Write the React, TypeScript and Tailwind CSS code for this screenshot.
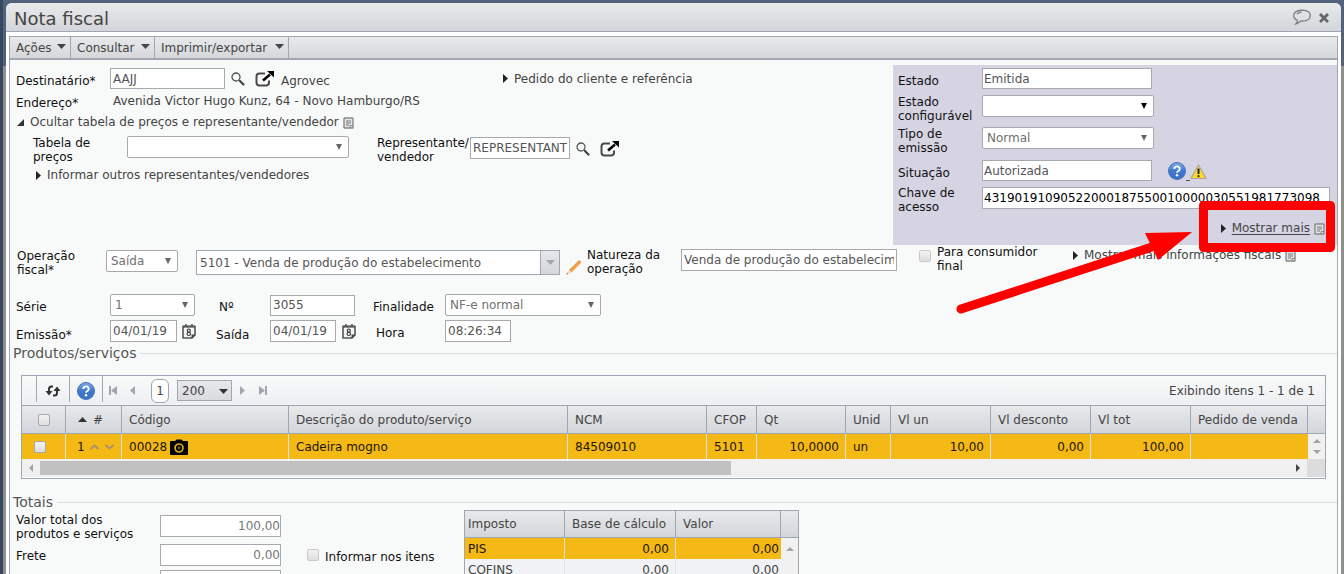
import type { ReactNode } from 'react';
import clsx from 'clsx';

const columns = [
  { label: 'Código', width: 'w-[167px]' },
  { label: 'Descrição do produto/serviço', width: '' },
  { label: 'NCM', width: 'w-[139px]' },
  { label: 'CFOP', width: 'w-[50px]' },
  { label: 'Qt', width: 'w-[89px]' },
  { label: 'Unid', width: 'w-[45px]' },
  { label: 'Vl un', width: 'w-[100px]' },
  { label: 'Vl desconto', width: 'w-[100px]' },
  { label: 'Vl tot', width: 'w-[100px]' },
  { label: 'Pedido de venda', width: 'w-[117px]' },
];

const taxes = [
  { name: 'PIS', base: '0,00', value: '0,00' },
  { name: 'COFINS', base: '0,00', value: '0,00' },
];

const menus = [
  { label: 'Ações', width: 'w-[61px]' },
  { label: 'Consultar', width: 'w-[84px]' },
  { label: 'Imprimir/exportar', width: 'w-[134px]' },
];

/* ---------- Icons ---------- */

function Triangle({ dir, className }: { dir: 'up' | 'down' | 'left' | 'right'; className?: string }) {
  const points = {
    up: '0,8 8,8 4,0',
    down: '0,0 8,0 4,8',
    left: '8,0 8,8 0,4',
    right: '0,0 8,4 0,8',
  };
  return (
    <svg viewBox="0 0 8 8" preserveAspectRatio="none" fill="currentColor" className={clsx('shrink-0', className)}>
      <polygon points={points[dir]} />
    </svg>
  );
}

function SearchIcon() {
  return (
    <svg viewBox="0 0 14 14" fill="none" className="h-3.5 w-3.5">
      <circle cx="5" cy="5" r="4" stroke="#555" strokeWidth="1.3" />
      <path d="M8 8l1.5 1.5" stroke="#444" strokeWidth="1.3" />
      <path d="M9 9l3.5 3.5" stroke="#444" strokeWidth="2.2" strokeLinecap="round" />
    </svg>
  );
}

function OpenIcon() {
  return (
    <svg viewBox="0 0 20 17" fill="none" className="h-[17px] w-5">
      <path d="M10 3.500H4.500Q1.500 3.500 1.500 6.500v6Q1.500 15.500 4.500 15.500H11q3 0 3-3V10.500" stroke="#4a4a4a" strokeWidth="2" />
      <path d="M8 10.500l7-6" stroke="#000" strokeWidth="2.600" />
      <path d="M12 1H19v6.500z" fill="#000" />
    </svg>
  );
}

function NoteIcon() {
  return (
    <svg viewBox="0 0 11 12" fill="none" className="h-3 w-[11px] shrink-0">
      <rect x="1" y="1" width="9" height="10" rx="0.500" fill="#e4e4e4" stroke="#888" strokeWidth="1.400" />
      <path d="M3 4h5M3 6h5M3 8h3" stroke="#777" />
      <path d="M7 11V8.500h3" stroke="#888" />
    </svg>
  );
}

function CalendarIcon() {
  return (
    <svg viewBox="0 0 14 15" fill="none" className="h-[15px] w-3.5">
      <path d="M1 2.500h12V11l-3 3H1z" fill="#f4f4f4" stroke="#555" strokeWidth="1.600" />
      <path d="M1 2.500h12" stroke="#555" strokeWidth="2" />
      <path d="M4 0v2M10 0v2" stroke="#555" strokeWidth="1.500" />
      <path d="M9.500 14.500V10.500H13.500z" fill="#444" />
      <circle cx="6.800" cy="6.600" r="1.500" stroke="#444" strokeWidth="1.200" />
      <circle cx="6.800" cy="9.800" r="1.700" stroke="#444" strokeWidth="1.200" />
    </svg>
  );
}

function HelpIcon() {
  return (
    <svg viewBox="0 0 18 18" className="h-[18px] w-[18px]">
      <defs>
        <linearGradient id="help" x1="0" y1="0" x2="0" y2="1">
          <stop offset="0" stopColor="#7fabe6" />
          <stop offset="0.5" stopColor="#3f78cc" />
          <stop offset="1" stopColor="#3a70c4" />
        </linearGradient>
      </defs>
      <circle cx="9" cy="9" r="8.500" fill="url(#help)" stroke="#4673b8" />
      <path d="M6.300 7q0-2.600 2.700-2.600T11.700 7q0 1.300-1.400 2Q9 9.700 9 10.800" fill="none" stroke="#fff" strokeWidth="1.900" />
      <circle cx="9" cy="13.300" r="1.200" fill="#fff" />
    </svg>
  );
}

function WarningIcon() {
  return (
    <svg viewBox="0 0 17 16" className="h-4 w-[17px]">
      <path d="M8.500 1L16 14.500H1z" fill="#ffdc28" stroke="#a5a5a0" strokeWidth="1.200" strokeLinejoin="round" />
      <path d="M8.500 4.500v5.500" stroke="#222" strokeWidth="2" />
      <circle cx="8.500" cy="12.200" r="1.100" fill="#222" />
    </svg>
  );
}

function PencilIcon() {
  return (
    <svg viewBox="0 0 16 16" className="h-4 w-4">
      <path d="M12.500 1.500Q13.500 1 14.500 2T14.800 4L5.500 13.500 2.800 11z" fill="#f0a04b" />
      <path d="M2.800 11L5.500 13.500 1 15.500 0.500 15z" fill="#f3dcc0" />
      <path d="M1.200 13.800L2.300 15 0.500 15.500z" fill="#8a6a4a" />
    </svg>
  );
}

function CameraIcon() {
  return (
    <svg viewBox="0 0 18 16" className="h-4 w-[18px]">
      <path d="M5 2L6.500 0.500h5L13 2H17q1 0 1 1V15q0 1-1 1H1q-1 0-1-1V3q0-1 1-1z" fill="#000" />
      <circle cx="9" cy="9" r="4" fill="none" stroke="#e0a817" strokeWidth="1.700" />
      <circle cx="9" cy="9" r="1.400" fill="#7a5c10" />
    </svg>
  );
}

function RefreshIcon() {
  return (
    <svg viewBox="0 0 16 12" fill="none" className="h-3 w-4">
      <path d="M8 1.500H6.500Q4 1.500 4 4v4" stroke="#333" strokeWidth="2" />
      <path d="M0.500 6h7L4 10.500z" fill="#333" />
      <path d="M8 10.500h1.500Q12 10.500 12 8V4" stroke="#333" strokeWidth="2" />
      <path d="M8.500 6h7L12 1.500z" fill="#333" />
    </svg>
  );
}

/* ---------- Form pieces ---------- */

function Label({ htmlFor, className, children }: { htmlFor?: string; className?: string; children: ReactNode }) {
  return (
    <label htmlFor={htmlFor} className={clsx('shrink-0 leading-[14px] text-[#111]', className)}>
      {children}
    </label>
  );
}

function TextInput({ id, value, className, label, color = 'text-[#555]' }: { id?: string; value?: string; className?: string; label?: string; color?: string }) {
  return (
    <input
      id={id}
      type="text"
      aria-label={label}
      defaultValue={value}
      className={clsx('shrink-0 border border-[#a6a9ae] bg-white outline-none', color, className)}
    />
  );
}

function Select({ id, value = '', className, arrow = 'text-[#666]' }: { id: string; value?: string; className?: string; arrow?: string }) {
  return (
    <span className={clsx('relative h-[22px] shrink-0', className)}>
      <select
        id={id}
        className="block h-full w-full appearance-none rounded-xs border border-[#a6a9ae] bg-white pl-1 text-[#707070] outline-none"
      >
        <option>{value}</option>
      </select>
      <Triangle dir="down" className={clsx('pointer-events-none absolute top-2 right-[7px] h-1.5 w-1.5', arrow)} />
    </span>
  );
}

function Checkbox({ id, label, className }: { id?: string; label?: string; className?: string }) {
  return (
    <input
      id={id}
      type="checkbox"
      aria-label={label}
      className={clsx('block h-3 w-3 shrink-0 appearance-none rounded-xs border bg-linear-to-b from-[#f2f2f2] to-[#dedede]', className)}
    />
  );
}

function Toggle({ open, underline, note, className, children }: { open?: boolean; underline?: boolean; note?: boolean; className?: string; children: ReactNode }) {
  return (
    <div className={clsx('flex items-center', className)}>
      <a href="#" className="flex items-center gap-1.5 whitespace-nowrap text-[#444]">
        {open ? (
          <svg viewBox="0 0 8 8" className="h-[7px] w-[7px]" fill="#333">
            <polygon points="8,0 8,8 0,8" />
          </svg>
        ) : (
          <Triangle dir="right" className="h-[9px] w-[5px] text-[#222]" />
        )}
        <span className={clsx(underline && 'underline underline-offset-2')}>{children}</span>
      </a>
      {note && (
        <span className="mt-0.5 ml-1">
          <NoteIcon />
        </span>
      )}
    </div>
  );
}

function SectionTitle({ className, children }: { className?: string; children: ReactNode }) {
  return (
    <div className={clsx('flex h-4 items-center gap-1 pl-[3px]', className)}>
      <h2 className="text-sm leading-4 text-[#555]">{children}</h2>
      <div className="h-px flex-1 bg-[#dcdfe0]" />
    </div>
  );
}

/* ---------- Sections ---------- */

function Recipient() {
  return (
    <div className="min-w-0 flex-1 pt-[3px]">
      <div className="flex h-[21px] items-center">
        <div className="flex w-[493px] items-center">
          <Label htmlFor="dest" className="w-[100px] pt-1 pl-1.5">Destinatário*</Label>
          <TextInput id="dest" value="AAJJ" className="h-[21px] w-[115px] pl-0.5" />
          <button type="button" aria-label="Pesquisar" className="ml-1.5"><SearchIcon /></button>
          <button type="button" aria-label="Abrir cadastro" className="ml-2.5"><OpenIcon /></button>
          <span className="ml-1.5 pt-1 leading-[14px]">Agrovec</span>
        </div>
        <Toggle>Pedido do cliente e referência</Toggle>
      </div>
      <div className="flex h-6 items-center">
        <span className="w-[103px] pt-1 pl-1.5 leading-[14px] text-[#111]">Endereço*</span>
        <span>Avenida Victor Hugo Kunz, 64 - Novo Hamburgo/RS</span>
      </div>
      <Toggle open note className="h-[18px] pl-[7px]">Ocultar tabela de preços e representante/vendedor</Toggle>
      <div className="mt-[5px] flex h-7 items-start">
        <Label htmlFor="tabela" className="w-[117px] pl-[23px]">Tabela de<br />preços</Label>
        <Select id="tabela" className="w-[222px]" />
        <Label htmlFor="rep" className="ml-7 w-[93px]">Representante/<br />vendedor</Label>
        <TextInput id="rep" value="REPRESENTANTE" className="mt-px h-[22px] w-[100px] px-0.5" />
        <button type="button" aria-label="Pesquisar" className="mt-1.5 ml-1.5"><SearchIcon /></button>
        <button type="button" aria-label="Abrir cadastro" className="mt-1 ml-2.5"><OpenIcon /></button>
      </div>
      <Toggle className="h-[22px] pl-[26px]">Informar outros representantes/vendedores</Toggle>
    </div>
  );
}

function StatusPanel() {
  return (
    <aside className="relative flex w-[444px] shrink-0 flex-col gap-[5px] bg-[#d6d4e3] pt-[3px] pb-2 pl-[5px]">
      <div className="flex h-[21px] items-center">
        <Label htmlFor="estado" className="w-[84px] pt-1">Estado</Label>
        <TextInput id="estado" value="Emitida" className="h-[21px] w-[170px] pl-px" />
      </div>
      <div className="flex h-7 items-start">
        <Label htmlFor="config" className="w-[84px] pt-px">Estado<br />configurável</Label>
        <Select id="config" className="mt-px w-[172px]" arrow="text-black" />
      </div>
      <div className="flex h-7 items-start">
        <Label htmlFor="tipo" className="w-[84px]">Tipo de<br />emissão</Label>
        <Select id="tipo" value="Normal" className="w-[172px]" />
      </div>
      <div className="flex h-[21px] items-center">
        <Label htmlFor="situacao" className="w-[84px] pt-1">Situação</Label>
        <TextInput id="situacao" value="Autorizada" className="h-[21px] w-[170px] pl-px" />
        <a href="#" className="ml-4 flex items-end">
          <HelpIcon />
          <span className="mb-[-1px] w-1 border-b border-[#555]" />
          <WarningIcon />
        </a>
      </div>
      <div className="flex h-7 items-start">
        <Label htmlFor="chave" className="w-[84px]">Chave de<br />acesso</Label>
        <TextInput
          id="chave"
          value="43190191090522000187550010000030551981773098"
          color="text-black"
          className="mt-px h-[22px] w-[348px] pl-px"
        />
      </div>
      <Toggle underline note className="h-[18px] justify-end pr-3">Mostrar mais</Toggle>

      {/* Highlight drawn over the "Mostrar mais" link */}
      <svg viewBox="0 0 444 190" className="pointer-events-none absolute top-0 left-0 z-10 h-[190px] w-[444px] overflow-visible">
        <rect x="310.500" y="140.500" width="127" height="42" fill="none" stroke="#ff0000" strokeWidth="9" strokeLinejoin="round" />
        <path d="M68 244L262 181" stroke="#ff0000" strokeWidth="9" strokeLinecap="round" />
        <polygon points="299,167 252,168 265,195" fill="#ff0000" />
      </svg>
    </aside>
  );
}

function FiscalOperation() {
  return (
    <div className="flex items-start">
      <Label htmlFor="op" className="w-24 pt-1 pl-[7px]">Operação<br />fiscal*</Label>
      <Select id="op" value="Saída" className="mt-[5px] w-[72px]" />
      <div className="mt-[5px] ml-[18px] flex h-[25px] w-[364px] shrink-0 border border-[#9fa7b2] bg-white">
        <input
          aria-label="CFOP da operação"
          defaultValue="5101 - Venda de produção do estabelecimento"
          className="min-w-0 flex-1 pl-[3px] text-[#555] outline-none"
        />
        <button type="button" aria-label="Abrir lista" className="flex w-[19px] items-center justify-center border-l border-[#9fa7b2] bg-linear-to-b from-[#e6e8eb] to-[#d3d6da]">
          <Triangle dir="down" className="h-[5px] w-[9px] text-[#9fa7b2]" />
        </button>
      </div>
      <button type="button" aria-label="Editar" className="mt-3.5 ml-1.5 shrink-0"><PencilIcon /></button>
      <Label htmlFor="natureza" className="ml-[5px] w-[94px] pt-[3px]">Natureza da<br />operação</Label>
      <TextInput id="natureza" value="Venda de produção do estabelecimento" className="mt-1 h-[22px] w-[216px] px-0.5" />
      <Checkbox id="consumidor" className="mt-[5px] ml-[22px] border-[#c9c9c9]" />
      <Label htmlFor="consumidor" className="ml-1.5 w-[136px]">Para consumidor<br />final</Label>
      <Toggle note className="h-5">Mostrar mais informações fiscais</Toggle>
    </div>
  );
}

function Identification() {
  return (
    <div className="mt-[17px] flex flex-col gap-1">
      <div className="flex h-[22px] items-center">
        <Label htmlFor="serie" className="w-[100px] pt-1 pl-1.5">Série</Label>
        <Select id="serie" value="1" className="w-[85px]" />
        <Label htmlFor="numero" className="ml-6 w-[51px] pt-1">Nº</Label>
        <TextInput id="numero" value="3055" className="h-[21px] w-[85px] pl-0.5" />
        <Label htmlFor="finalidade" className="ml-[18px] w-[72px] pt-1">Finalidade</Label>
        <Select id="finalidade" value="NF-e normal" className="w-[156px]" />
      </div>
      <div className="flex h-[22px] items-center">
        <Label htmlFor="emissao" className="w-[100px] pt-2 pl-1.5">Emissão*</Label>
        <TextInput id="emissao" value="04/01/19" className="h-[22px] w-[67px] pl-0.5" />
        <button type="button" aria-label="Calendário de emissão" className="ml-[5px]"><CalendarIcon /></button>
        <Label htmlFor="saida" className="ml-5 w-[54px] pt-2">Saída</Label>
        <TextInput id="saida" value="04/01/19" className="h-[22px] w-[66px] pl-0.5" />
        <button type="button" aria-label="Calendário de saída" className="ml-1.5"><CalendarIcon /></button>
        <Label htmlFor="hora" className="ml-5 w-[69px] pt-1">Hora</Label>
        <TextInput id="hora" value="08:26:34" className="h-[22px] w-[66px] pl-0.5" />
      </div>
    </div>
  );
}

function ProductsGrid() {
  const cell = 'border-r border-[#dfe3e8] pr-1.5 pl-[7px]';
  const head = 'border-r border-b border-[#9fa7b2] px-[7px] text-left font-normal text-[#444]';
  return (
    <div className="mx-[11px] mt-3.5 border border-[#9fa7b2] bg-white">
      <div className="flex h-[29px] items-center bg-linear-to-b from-[#f8faf9] to-[#edeff2]">
        <div className="flex h-full items-start">
          <div className="h-[26px] w-[15px] border-r border-[#9fa7b2]" />
          <button type="button" aria-label="Atualizar" className="flex h-[26px] w-[33px] items-center justify-center border-r border-[#9fa7b2] pt-1">
            <RefreshIcon />
          </button>
          <button type="button" aria-label="Ajuda" className="flex h-[26px] w-[33px] items-center justify-center border-r border-[#9fa7b2] pt-1">
            <HelpIcon />
          </button>
        </div>
        <button type="button" aria-label="Primeira página" className="ml-1.5 flex items-center text-[#9fa7b2]">
          <span className="h-[9px] w-0.5 bg-[#9fa7b2]" />
          <Triangle dir="left" className="h-[9px] w-1.5" />
        </button>
        <button type="button" aria-label="Página anterior" className="ml-[13px] text-[#9fa7b2]">
          <Triangle dir="left" className="h-[9px] w-[5px]" />
        </button>
        <button type="button" className="ml-4 h-6 w-[18px] rounded-md border border-[#9fa7b2] bg-white">1</button>
        <span className="relative ml-2 h-[21px] w-[55px]">
          <select aria-label="Itens por página" className="block h-full w-full appearance-none border border-[#9fa7b2] bg-linear-to-b from-[#e6e8eb] to-[#d9dbdf] pl-1 outline-none">
            <option>200</option>
          </select>
          <Triangle dir="down" className="pointer-events-none absolute top-[9px] right-1 h-[5px] w-[9px] text-[#333]" />
        </span>
        <button type="button" aria-label="Próxima página" className="ml-2 text-[#9fa7b2]">
          <Triangle dir="right" className="h-[9px] w-[5px]" />
        </button>
        <button type="button" aria-label="Última página" className="ml-3.5 flex items-center text-[#9fa7b2]">
          <Triangle dir="right" className="h-[9px] w-1.5" />
          <span className="h-[9px] w-0.5 bg-[#9fa7b2]" />
        </button>
        <span className="ml-auto pr-2.5">Exibindo itens 1 - 1 de 1</span>
      </div>

      <table className="w-full table-fixed border-separate border-spacing-0 border-t border-[#9fa7b2] whitespace-nowrap">
        <thead>
          <tr className="h-7 bg-linear-to-b from-[#e8eaec] to-[#d1d4d9]">
            <th className={clsx(head, 'w-11')}>
              <Checkbox label="Selecionar todos" className="mx-auto border-[#a6a9ae]" />
            </th>
            <th className={clsx(head, 'w-14')}>
              <span className="flex items-center gap-1.5 pl-[5px]">
                <Triangle dir="up" className="h-[5px] w-[9px] text-[#333]" />#
              </span>
            </th>
            {columns.map((c) => (
              <th key={c.label} className={clsx(head, c.width)}>{c.label}</th>
            ))}
            <th aria-label="Rolagem" className="w-[17px] border-b border-[#9fa7b2]" />
          </tr>
        </thead>
        <tbody>
          <tr className="h-[25px] bg-[#f5b916] text-[#1c1600]">
            <td className={cell}>
              <Checkbox label="Selecionar item 1" className="ml-[5px] border-[#a6a9ae]" />
            </td>
            <td className={cell}>
              <span className="flex items-center gap-1 pl-1">
                1
                <svg viewBox="0 0 26 8" fill="none" stroke="#a89468" strokeWidth="2" className="h-2 w-[26px]">
                  <path d="M1.500 6l4-3.500 4 3.500M16.500 2l4 3.500L24.500 2" />
                </svg>
              </span>
            </td>
            <td className={cell}>
              <span className="flex items-center gap-[3px]">
                00028
                <CameraIcon />
              </span>
            </td>
            <td className={cell}>Cadeira mogno</td>
            <td className={cell}>84509010</td>
            <td className={cell}>5101</td>
            <td className={clsx(cell, 'text-right')}>10,0000</td>
            <td className={cell}>un</td>
            <td className={clsx(cell, 'text-right')}>10,00</td>
            <td className={clsx(cell, 'text-right')}>0,00</td>
            <td className={clsx(cell, 'text-right')}>100,00</td>
            <td className="border-r border-[#f5b916]" />
            <td className="bg-[#f1f1f1] p-0">
              <div className="flex flex-col items-center gap-[7px] text-[#a3a3a3]">
                <Triangle dir="up" className="h-1 w-2" />
                <Triangle dir="down" className="h-1 w-2" />
              </div>
            </td>
          </tr>
        </tbody>
      </table>

      {/* Horizontal scrollbar */}
      <div className="mb-px flex h-[18px] items-center bg-[#f0f0f0]">
        <Triangle dir="left" className="ml-[7px] h-2 w-1 text-[#a3a3a3]" />
        <div className="ml-[7px] flex-1">
          <div className="h-3.5 w-[55%] bg-[#c1c1c1]" />
        </div>
        <Triangle dir="right" className="mr-[7px] h-2 w-1 text-[#444]" />
        <div className="h-full w-[18px] bg-[#dcdcdc]" />
      </div>
    </div>
  );
}

function Totals() {
  const head = 'border-r border-b border-[#9fa7b2] text-left font-normal';
  return (
    <div className="flex items-start">
      <div className="flex flex-col gap-1 pt-0.5">
        <div className="flex h-7 items-start">
          <Label htmlFor="total" className="w-[150px] pt-px pl-1.5">Valor total dos<br />produtos e serviços</Label>
          <TextInput id="total" value="100,00" color="text-[#777]" className="mt-[3px] h-[22px] w-[121px] text-right" />
        </div>
        <div className="flex h-[22px] items-center">
          <Label htmlFor="frete" className="w-[150px] pt-0.5 pl-1.5">Frete</Label>
          <TextInput id="frete" value="0,00" color="text-[#777]" className="h-[22px] w-[121px] text-right" />
          <Checkbox id="itens" className="ml-[26px] border-[#c9c9c9]" />
          <Label htmlFor="itens" className="ml-1.5 w-[139px] pt-1">Informar nos itens</Label>
        </div>
        <TextInput label="Seguro" className="ml-[150px] h-[22px] w-[121px]" />
      </div>

      <div className="w-[335px] border border-[#9fa7b2] bg-white">
        <table className="w-full table-fixed border-separate border-spacing-0">
          <thead>
            <tr className="h-[27px] bg-linear-to-b from-[#e8eaec] to-[#d1d4d9]">
              <th className={clsx(head, 'w-[100px] pl-[3px]')}>Imposto</th>
              <th className={clsx(head, 'w-[111px] pl-[7px]')}>Base de cálculo</th>
              <th className={clsx(head, 'w-[105px] pl-[7px]')}>Valor</th>
              <th aria-label="Rolagem" className="border-b border-[#9fa7b2]" />
            </tr>
          </thead>
          <tbody>
            {taxes.map((tax, i) => (
              <tr key={tax.name} className={clsx('h-[21px]', i === 0 ? 'bg-[#f5b916] text-[#1c1600]' : 'bg-[#f1f2f5]')}>
                <td className="border-r border-[#dfe3e8] pl-[3px]">{tax.name}</td>
                <td className="border-r border-[#dfe3e8] pr-1.5 text-right">{tax.base}</td>
                <td className="pr-0.5 text-right">{tax.value}</td>
                <td className="bg-[#f1f1f1] p-0">
                  {i === 0 && <Triangle dir="up" className="mx-auto h-1 w-2 text-[#a3a3a3]" />}
                </td>
              </tr>
            ))}
          </tbody>
        </table>
      </div>
    </div>
  );
}

export default function App() {
  return (
    <div className="h-screen overflow-hidden border-l-3 border-[#34485f] bg-[linear-gradient(#52627a_66px,#918f8d_66px)] pt-[3px] pr-[3px] pl-[3px] font-['DejaVu_Sans',sans-serif] text-xs text-[#444]">
      <div className="flex h-full flex-col rounded-t-md bg-white">
        <header className="flex h-[29px] shrink-0 items-center rounded-t-md border-b border-[#9fa7b2] bg-linear-to-b from-[#e9eaec] to-[#d2d5d9] pr-3 pl-2">
          <h1 className="pt-1 text-lg leading-6">Nota fiscal</h1>
          <button type="button" aria-label="Comentários" className="ml-auto">
            <svg viewBox="0 0 18 16" fill="none" stroke="#777" strokeWidth="1.200" className="h-4 w-[18px]">
              <path d="M4.500 11.500Q0.700 9.700 0.700 6.800 0.700 1.500 9 1.200 17.300 1.500 17.300 6.500 17.300 11.800 9 12.200H7.500Q5.800 14.200 3 14.800 4.700 13.300 4.500 11.500z" />
              <path d="M4 5Q5.500 3.300 8.500 3.200" />
            </svg>
          </button>
          <button type="button" aria-label="Fechar" className="ml-2 pt-0.5">
            <svg viewBox="0 0 10 10" stroke="#666" strokeWidth="2.800" className="h-2.5 w-2.5">
              <path d="M1 1l8 8M9 1l-8 8" />
            </svg>
          </button>
        </header>

        <main className="mx-[3px] mt-1 min-h-0 flex-1 overflow-hidden border border-b-0 border-[#9fa7b2] bg-[#f8faf9]">
          <nav className="flex h-[23px] border-b-2 border-[#9fa7b2] bg-linear-to-b from-[#e8e9eb] to-[#d5d7da]">
            {menus.map((menu) => (
              <button
                key={menu.label}
                type="button"
                className={clsx('flex items-center justify-between border-r border-[#9fa7b2] pr-1 pl-1.5', menu.width)}
              >
                {menu.label}
                <Triangle dir="down" className="mb-0.5 h-[5px] w-[9px]" />
              </button>
            ))}
          </nav>

          <div className="flex pt-[5px]">
            <Recipient />
            <StatusPanel />
          </div>
          <FiscalOperation />
          <Identification />
          <SectionTitle className="mt-[3px]">Produtos/serviços</SectionTitle>
          <ProductsGrid />
          <SectionTitle className="mt-[15px]">Totais</SectionTitle>
          <Totals />
        </main>
      </div>
    </div>
  );
}
